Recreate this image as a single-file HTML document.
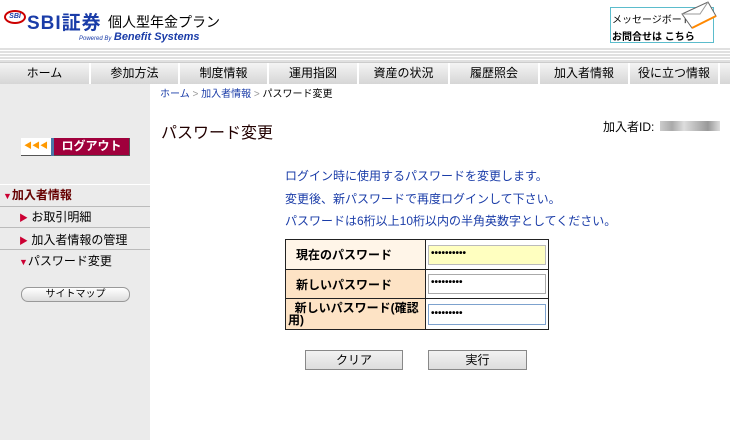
<!DOCTYPE html>
<html><head><meta charset="utf-8"><style>
*{margin:0;padding:0;box-sizing:border-box}
body{width:730px;height:440px;position:relative;overflow:hidden;background:#fff;font-family:"Liberation Sans","Noto Sans CJK JP",sans-serif;font-size:12px;color:#000}
.a{position:absolute;white-space:nowrap}
.stripe{left:0;top:47px;width:730px;height:15px;background:repeating-linear-gradient(#fff 0 1px,#e0e0e0 1px 3px)}
.nav{left:0;top:62px;width:730px;height:22px;background:linear-gradient(#f4f4f4,#d6d6d6);border-top:1px solid #ccc}
.nav div{position:absolute;top:0;height:21px;line-height:21px;text-align:center;font-size:12px;border-right:2px solid #fff}
.side{left:0;top:84px;width:150px;height:356px;background:#ebebeb}
.blue{color:#1a3ca8}
td{border:1px solid #222;vertical-align:middle}
</style></head><body>
<div class="a" style="left:4px;top:10px;width:22px;height:14px;border-radius:50%;border:2px solid #c00;font-size:7px;color:#1a3ca8;font-weight:bold;line-height:10px;text-align:center;font-style:italic">SBI</div>
<div class="a" style="left:27px;top:8px;font-size:19px;font-weight:bold;color:#1a3ca8;letter-spacing:1px">SBI証券</div>
<div class="a" style="left:108px;top:12px;font-size:14px">個人型年金プラン</div>
<div class="a" style="left:79px;top:31px;font-size:9px;color:#1a3ca8;font-style:italic"><span style="font-size:6px">Powered By</span> <b style="font-size:11px">Benefit Systems</b></div>
<div class="a" style="left:610px;top:7px;width:104px;height:36px;border:1px solid #5bbccc"></div>
<div class="a" style="left:612px;top:11px;font-size:10px">メッセージボード</div>
<div class="a" style="left:612px;top:28px;font-size:10px;font-weight:bold">お問合せは こちら</div>
<svg class="a" style="left:680px;top:0" width="38" height="30"><polygon points="2,14 28,2 36,16 12,28" fill="#fff" stroke="#666"/><polyline points="2,14 20,14 28,2" fill="none" stroke="#999"/><line x1="12" y1="28" x2="36" y2="16" stroke="#f80" stroke-width="2"/></svg>
<div class="a stripe"></div>
<div class="a nav">
<div style="left:0;width:91px">ホーム</div><div style="left:91px;width:89px">参加方法</div><div style="left:180px;width:89px">制度情報</div><div style="left:269px;width:90px">運用指図</div><div style="left:359px;width:91px">資産の状況</div><div style="left:450px;width:90px">履歴照会</div><div style="left:540px;width:90px">加入者情報</div><div style="left:630px;width:90px">役に立つ情報</div>
</div>
<div class="a side"></div>
<div class="a" style="left:160px;top:85px;font-size:10px"><span class="blue">ホーム</span> <span style="color:#999">&gt;</span> <span class="blue">加入者情報</span> <span style="color:#999">&gt;</span> パスワード変更</div>
<div class="a" style="left:21px;top:138px;width:109px;height:18px;background:#fff;border-right:1px solid #555;border-bottom:1px solid #555"></div>
<div class="a" style="left:24px;top:140px;font-size:8px;color:#f90">◀◀◀</div>
<div class="a" style="left:51px;top:138px;width:3px;height:18px;background:#4a78a8"></div>
<div class="a" style="left:54px;top:138px;width:75px;height:17px;background:#a0003c;color:#fff;font-weight:bold;font-size:12px;line-height:17px;text-align:center">ログアウト</div>
<div class="a" style="left:0;top:184px;width:150px;border-top:1px solid #fff"></div>
<div class="a" style="left:3px;top:186px;font-size:12px;font-weight:bold;color:#600"><span style="color:#c03;font-size:9px">▼</span>加入者情報</div>
<div class="a" style="left:0;top:206px;width:150px;border-top:1px solid #bbb"></div>
<div class="a" style="left:19px;top:208px"><span style="color:#c03;font-size:9px">▶</span> お取引明細</div>
<div class="a" style="left:0;top:227px;width:150px;border-top:1px solid #bbb"></div>
<div class="a" style="left:19px;top:231px"><span style="color:#c03;font-size:9px">▶</span> 加入者情報の管理</div>
<div class="a" style="left:0;top:249px;width:150px;border-top:1px solid #bbb"></div>
<div class="a" style="left:19px;top:252px"><span style="color:#c03;font-size:9px">▼</span>パスワード変更</div>
<div class="a" style="left:21px;top:287px;width:109px;height:15px;border:1px solid #999;border-radius:7px;background:linear-gradient(#fff,#ddd);font-size:10px;text-align:center;line-height:13px">サイトマップ</div>
<div class="a" style="left:161px;top:119px;font-size:16px;color:#200">パスワード変更</div>
<div class="a" style="left:603px;top:118px;font-size:12px">加入者ID:</div>
<div class="a" style="left:660px;top:121px;width:60px;height:10px;background:linear-gradient(90deg,#ccc,#aaa,#ddd,#bbb,#999,#ddd)"></div>
<div class="a blue" style="left:285px;top:167px">ログイン時に使用するパスワードを変更します。</div>
<div class="a blue" style="left:285px;top:190px">変更後、新パスワードで再度ログインして下さい。</div>
<div class="a blue" style="left:285px;top:212px">パスワードは6桁以上10桁以内の半角英数字としてください。</div>
<table class="a" style="left:285px;top:239px;width:264px;border-collapse:collapse;font-weight:bold;font-size:12px">
<tr style="height:30px"><td style="width:140px;background:#fff5e8;padding-left:10px">現在のパスワード</td><td style="padding:2px"><div style="height:20px;background:#ffffc0;border:1px solid #bbb;line-height:16px;font-size:10px;padding-left:2px">••••••••••</div></td></tr>
<tr style="height:29px"><td style="background:#fde3c5;padding-left:10px">新しいパスワード</td><td style="padding:2px"><div style="height:20px;background:#fff;border:1px solid #aaa;line-height:16px;font-size:10px;padding-left:2px">•••••••••</div></td></tr>
<tr style="height:31px"><td style="background:#fde3c5;padding-left:2px;line-height:12px">&nbsp;&nbsp;新しいパスワード(確認<br>用)</td><td style="padding:2px"><div style="height:21px;background:#fff;border:1px solid #7da2ce;line-height:17px;font-size:10px;padding-left:2px">•••••••••</div></td></tr>
</table>
<div class="a" style="left:305px;top:350px;width:98px;height:20px;border:1px solid #888;background:linear-gradient(#f2f2f2,#ddd);text-align:center;line-height:18px">クリア</div>
<div class="a" style="left:428px;top:350px;width:99px;height:20px;border:1px solid #888;background:linear-gradient(#f2f2f2,#ddd);text-align:center;line-height:18px">実行</div>
</body></html>
